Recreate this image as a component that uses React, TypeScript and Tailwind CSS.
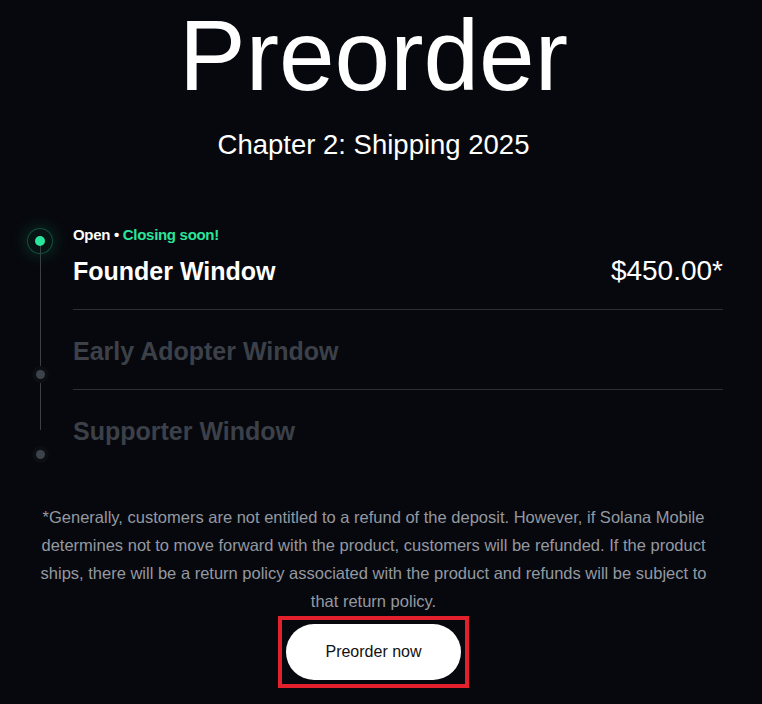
import React from 'react';

const rows = [
  { name: 'Founder Window', price: '$450.00*', active: true },
  { name: 'Early Adopter Window', active: false },
  { name: 'Supporter Window', active: false },
];

const Timeline: React.FC = () => (
  <div className="w-[26px] shrink-0 mt-[3px] flex flex-col items-center">
    {/* active step */}
    <div className="w-[26px] h-[26px] rounded-full border border-[#25e29a]/30 bg-[#25e29a]/[0.05] shadow-[0_0_18px_rgba(37,226,154,0.22)] flex items-center justify-center">
      <div className="w-[10px] h-[10px] rounded-full bg-[#2ae59c]" />
    </div>
    <div className="w-px h-[124px] -mt-[8px] bg-[#3a3f47]" />
    <div className="w-[9px] h-[9px] rounded-full bg-[#3d434b] shadow-[0_0_0_4px_#0c0e13]" />
    <div className="w-px h-[47px] mt-[4px] bg-[#3a3f47]" />
    <div className="w-[9px] h-[9px] mt-[20px] rounded-full bg-[#3d434b] shadow-[0_0_0_4px_#0c0e13]" />
  </div>
);

export default function App() {
  return (
    <div className="min-h-screen bg-[#07080d] font-['Liberation_Sans',Arial,sans-serif] text-white">
      <div className="w-[747px] flex flex-col items-center">
        <h1 className="pt-[5px] text-[100px] leading-[100px] font-normal">Preorder</h1>
        <p className="mt-[22px] text-[27.5px] leading-[36px]">Chapter 2: Shipping 2025</p>

        {/* Windows */}
        <section className="self-stretch mt-[62px] flex gap-[20px] pl-[27px] pr-[24px]">
          <Timeline />
          <div className="flex-1">
            {rows.map((row, i) =>
              row.active ? (
                <div key={row.name} className="pb-[22px] border-b border-[#2b2e34]">
                  <p className="text-[15px] leading-[20px] font-bold tracking-[-0.02em]">
                    Open • <span className="text-[#2ae59c]">Closing soon!</span>
                  </p>
                  <div className="mt-[10px] flex items-baseline justify-between">
                    <h2 className="text-[25px] leading-[32px] font-bold">{row.name}</h2>
                    <span className="text-[28px] leading-[32px]">{row.price}</span>
                  </div>
                </div>
              ) : (
                <div
                  key={row.name}
                  className={
                    i < rows.length - 1
                      ? 'pt-[25px] pb-[22px] border-b border-[#2b2e34]'
                      : 'pt-[25px]'
                  }
                >
                  <h2 className="text-[25px] leading-[32px] font-bold text-[#3b4049]">{row.name}</h2>
                </div>
              )
            )}
          </div>
        </section>

        <p className="mt-[44px] max-w-[688px] text-center text-[16.5px] leading-[28px] text-[#9499a1]">
          *Generally, customers are not entitled to a refund of the deposit. However, if Solana Mobile
          determines not to move forward with the product, customers will be refunded. If the product
          ships, there will be a return policy associated with the product and refunds will be subject to
          that return policy.
        </p>

        <div className="mt-px border-4 border-[#e3202b] p-[4px]">
          <button className="w-[175px] h-[56px] rounded-full bg-white text-[16px] text-[#111] flex items-center justify-center">
            Preorder now
          </button>
        </div>
      </div>
    </div>
  );
}
